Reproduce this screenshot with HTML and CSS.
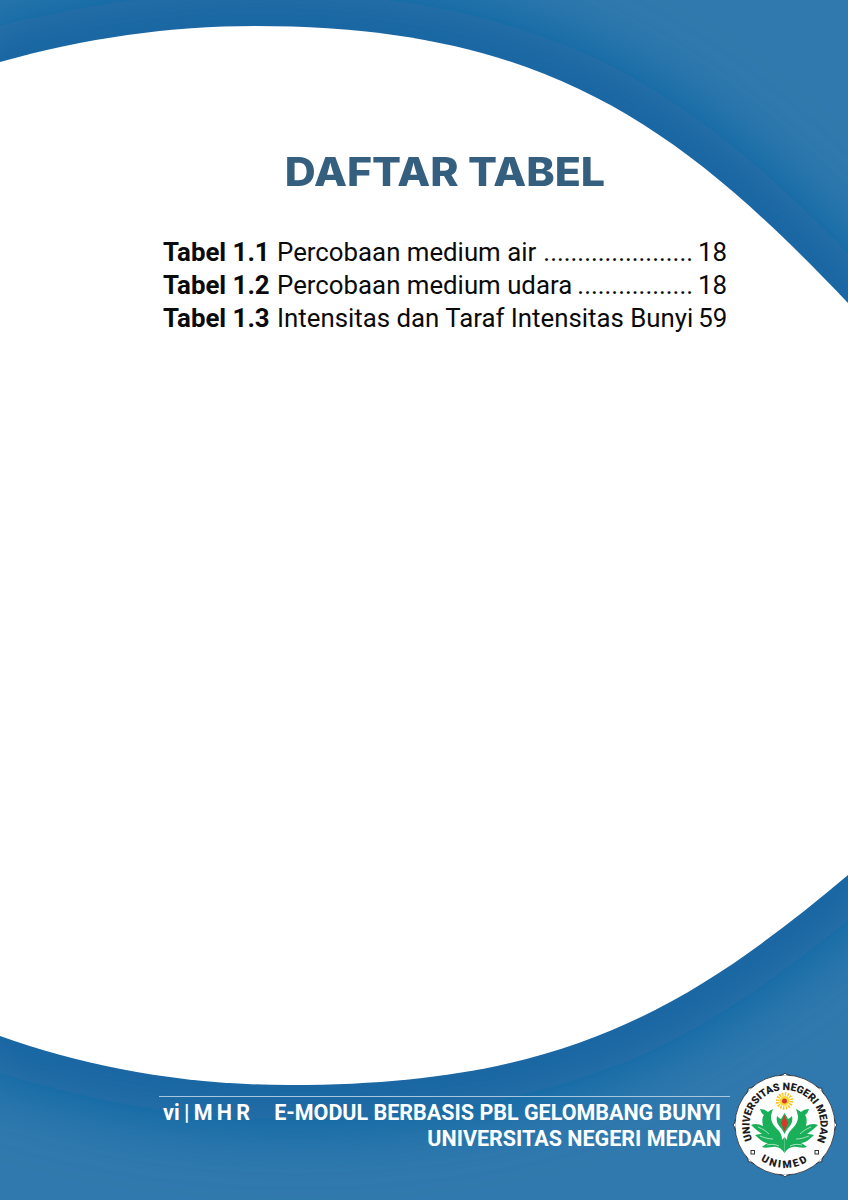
FILE: index.html
```html
<!DOCTYPE html>
<html lang="id">
<head>
<meta charset="utf-8">
<title>Daftar Tabel</title>
<link rel="stylesheet" href="styles.css">
</head>
<body>
<main class="page">
  <svg class="backdrop" viewBox="0 0 848 1200" aria-hidden="true">
    <defs>
      <path id="sheet" d="M0 62 C85 38 170 26 255 26 C542 26 677 123 848 303 L848 875 C686 1011 561 1085 290 1085 C180 1085 85 1066 0 1036 Z"/>
      <filter id="soft" x="-20%" y="-20%" width="140%" height="140%">
        <feGaussianBlur stdDeviation="34"/>
      </filter>
    </defs>
    <rect class="sea" width="848" height="1200"/>
    <use class="shade" href="#sheet" filter="url(#soft)"/>
    <use class="sheet" href="#sheet"/>
  </svg>

  <section class="content">
    <h1 class="title">DAFTAR TABEL</h1>
    <ul class="toc">
      <li class="toc-row"><span><b>Tabel 1.1</b> Percobaan medium air</span><span class="leader">......................</span><span>18</span></li>
      <li class="toc-row"><span><b>Tabel 1.2</b> Percobaan medium udara</span><span class="leader">.................</span><span>18</span></li>
      <li class="toc-row"><span><b>Tabel 1.3</b> Intensitas dan Taraf Intensitas Bunyi</span><span>59</span></li>
    </ul>
  </section>

  <footer class="footer">
    <div class="footer-line">
      <span class="author">vi | M H R</span>
      <span class="module">E-MODUL BERBASIS PBL GELOMBANG BUNYI</span>
    </div>
    <div class="footer-uni">UNIVERSITAS NEGERI MEDAN</div>
  </footer>

  <svg class="logo" viewBox="0 0 104 104" role="img" aria-label="Logo UNIMED">
    <defs>
      <path id="arcTop" d="M19.500 66.800 A35.500 35.500 0 1 1 84.500 66.800"/>
      <path id="arcBottom" d="M14.800 73.500 A43 43 0 0 0 89.200 73.500"/>
      <path id="spike" d="M46.500 2.500 Q51 2 52 0 Q53 2 57.500 2.500"/>
      <path id="frond" d="M51.500 80 C49 76 46 74 43 74 C39 73 34 76 29 74 C31 72 33 71 35 70 C31 70 27 67 22 62 C25 61 27 61 29 61 C26 59 22 56 18 52 C22 50 26 51 30 53 C29 49 29 44 31 42 C29 41 28 39 27 36 C30 36 33 37 35 39 C36 38 38 37 40 36 C39 39 38 42 38 44 C38 49 41 53 45 57 C48 60 49 63 49 67 L51.500 64 Z"/>
      <path id="vein" d="M25 54 C30 56 33 58 36 61 M27 63 C32 65 36 66 40 66 M34 72 C38 71 42 71 46 73"/>
    </defs>
    <circle class="logo-rim" cx="52" cy="52" r="50"/>
    <use class="logo-spike" href="#spike"/>
    <use class="logo-spike" href="#spike" transform="rotate(45 52 52)"/>
    <use class="logo-spike" href="#spike" transform="rotate(90 52 52)"/>
    <use class="logo-spike" href="#spike" transform="rotate(135 52 52)"/>
    <use class="logo-spike" href="#spike" transform="rotate(180 52 52)"/>
    <use class="logo-spike" href="#spike" transform="rotate(225 52 52)"/>
    <use class="logo-spike" href="#spike" transform="rotate(270 52 52)"/>
    <use class="logo-spike" href="#spike" transform="rotate(315 52 52)"/>
    <text class="logo-text"><textPath href="#arcTop" textLength="142">UNIVERSITAS NEGERI MEDAN</textPath></text>
    <text class="logo-text logo-text-low"><textPath href="#arcBottom" startOffset="50%" text-anchor="middle">UNIMED</textPath></text>
    <circle class="sun-rays" cx="51.500" cy="28" r="7"/>
    <circle class="sun-disc" cx="51.500" cy="28" r="5"/>
    <circle class="sun-core" cx="51.500" cy="28" r="2.500"/>
    <use class="leaf" href="#frond"/>
    <use class="leaf" href="#frond" transform="translate(103 0) scale(-1 1)"/>
    <use class="vein" href="#vein"/>
    <use class="vein" href="#vein" transform="translate(103 0) scale(-1 1)"/>
    <path class="leaf" d="M51.500 40 L55 46 C57 45 58 44 59 43 C60 47 59 51 56 54 C54 56 53 58 51.500 61 C50 58 49 56 47 54 C44 51 43 47 44 43 C45 44 46 45 48 46 Z"/>
    <path class="bud" d="M51.500 42 L55 50 L51.500 58 L48 50 Z"/>
    <rect class="stud" x="18" y="77.500" width="3.500" height="3.500"/>
    <rect class="stud" x="82" y="77.500" width="3.500" height="3.500"/>
  </svg>
</main>
</body>
</html>
```

FILE: styles.css
```css
html, body {
  margin: 0;
  padding: 0;
}

body {
  width: 848px;
  height: 1200px;
  overflow: hidden;
  background: #fff;
}

.page {
  position: relative;
  width: 848px;
  height: 1200px;
  overflow: hidden;
  display: flex;
  flex-direction: column;
  justify-content: space-between;
  font-family: Roboto, "Liberation Sans", sans-serif;
}

.backdrop {
  position: absolute;
  inset: 0;
  width: 848px;
  height: 1200px;
}

.sea {
  fill: #3079ae;
}

.shade {
  fill: none;
  stroke: #08609f;
  stroke-width: 70;
}

.sheet {
  fill: #fff;
}

.content {
  position: relative;
  padding: 148px 121px 0 163px;
}

.title {
  margin: 0 0 40px;
  text-align: center;
  font-family: Inter, "Open Sans", sans-serif;
  font-weight: 800;
  font-size: 39px;
  line-height: 48px;
  color: #355f7f;
  transform: scaleX(1.1);
}

.toc {
  list-style: none;
  margin: 0;
  padding: 0;
  color: #0b0b0b;
  font-size: 25.800px;
  line-height: 33px;
}

.toc-row {
  display: flex;
  justify-content: space-between;
  gap: 5px;
  white-space: nowrap;
}

.toc-row b {
  font-weight: 700;
  margin-right: 1px;
}

.leader {
  flex: 1;
  text-align: right;
}

.footer {
  position: relative;
  margin: 0 118px 0 159px;
  padding: 3px 9px 48px 4px;
  border-top: 1px solid #a9c6dc;
  color: #fff;
  font-weight: 700;
  font-size: 21.500px;
  line-height: 26px;
  white-space: nowrap;
}

.footer-line {
  display: flex;
  justify-content: space-between;
}

.author {
  word-spacing: -1px;
}

.footer-uni {
  text-align: right;
}

.logo {
  position: absolute;
  left: 733px;
  top: 1073px;
  width: 104px;
  height: 104px;
  overflow: visible;
}

.logo-rim {
  fill: #fff;
  stroke: #2a2a2e;
  stroke-width: 0.800;
}

.logo-spike {
  fill: #fff;
  stroke: #2a2a2e;
  stroke-width: 0.800;
}

.logo-text {
  font-family: Roboto, "Liberation Sans", sans-serif;
  font-weight: 900;
  font-size: 10.500px;
  fill: #1b1b20;
}

.logo-text-low {
  letter-spacing: 2px;
}

.sun-rays {
  fill: none;
  stroke: #f5c422;
  stroke-width: 3.400;
  stroke-dasharray: 1.500 1.250;
}

.sun-disc {
  fill: #fbd930;
}

.sun-core {
  fill: #d8392e;
}

.leaf {
  fill: #1ab05a;
}

.vein {
  fill: none;
  stroke: #fff;
  stroke-width: 0.600;
}

.bud {
  fill: #d8372c;
}

.stud {
  fill: #fff;
  stroke: #333;
  stroke-width: 1;
}
```
